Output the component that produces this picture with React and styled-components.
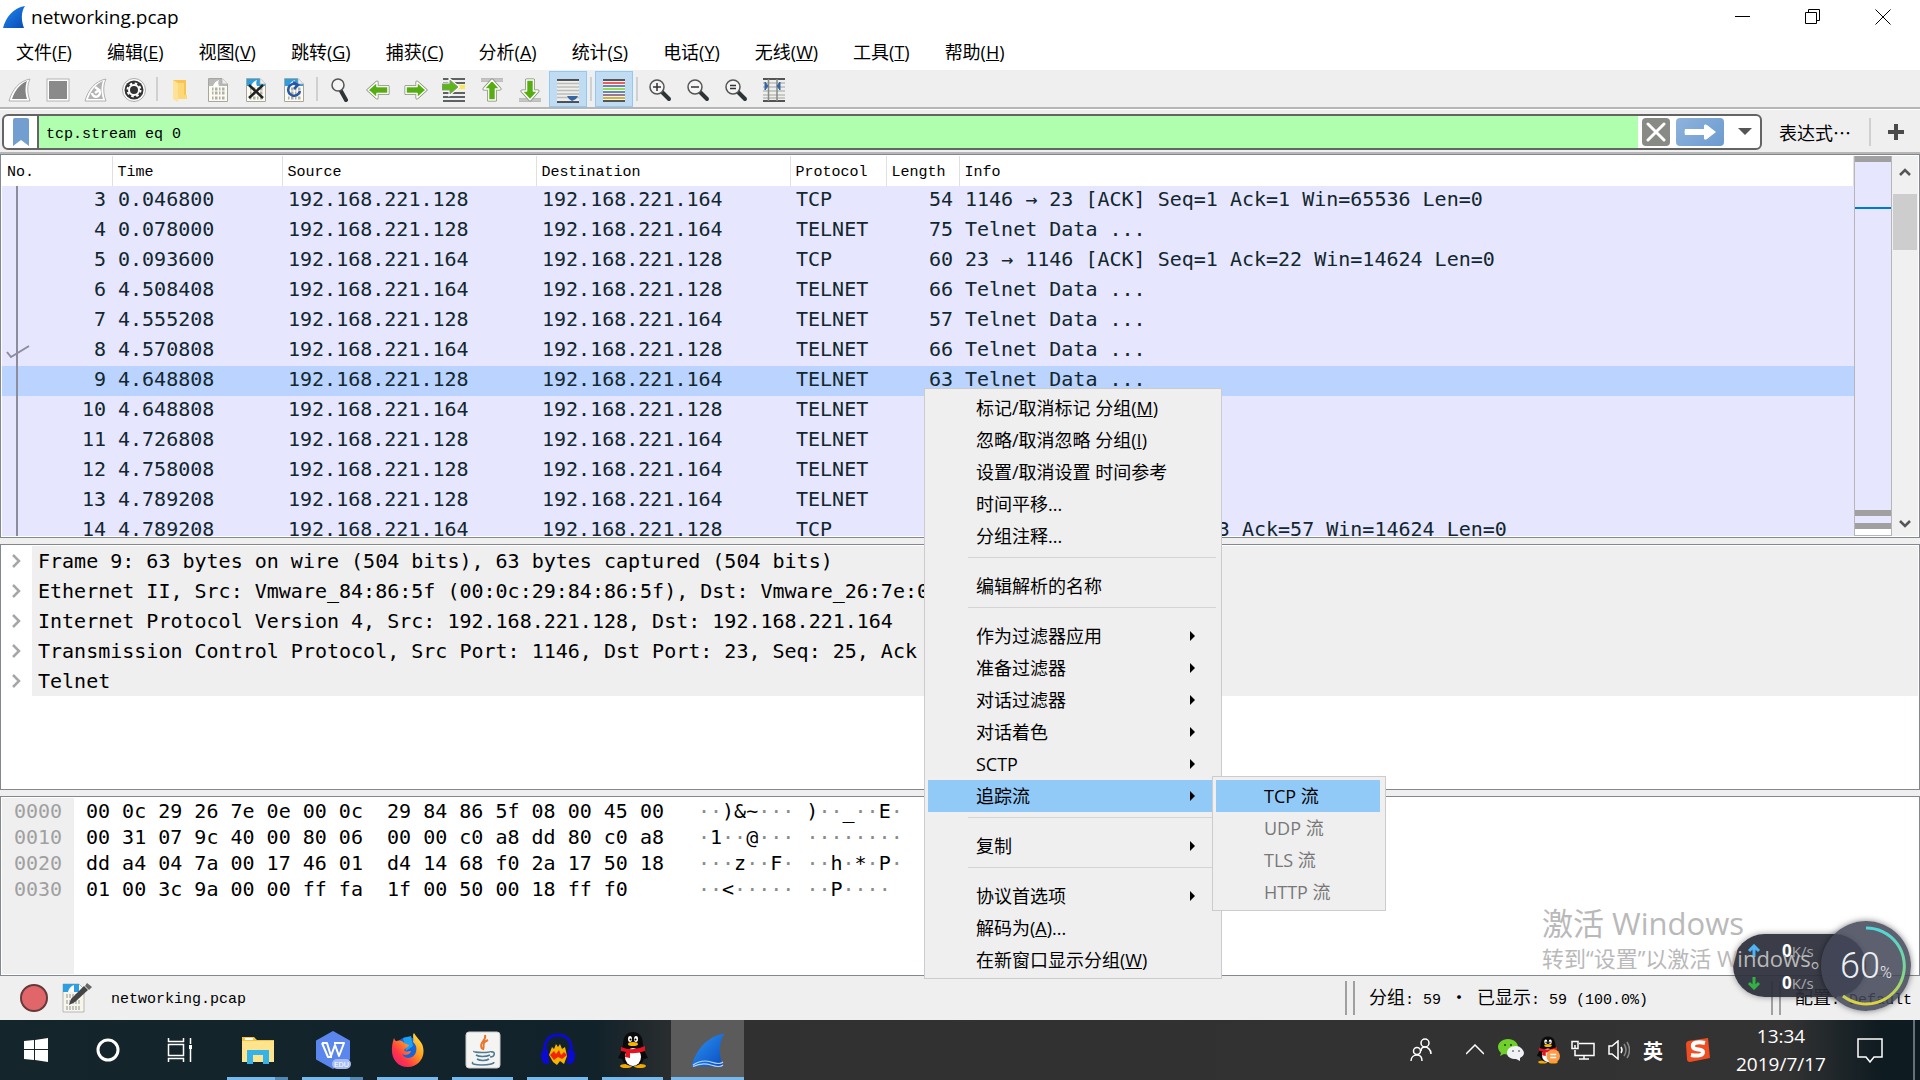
import styled, { createGlobalStyle } from 'styled-components';

const uiFont = `'Open Sans', 'Noto Sans CJK SC', sans-serif`;
const cjkFont = `'Noto Sans CJK SC', sans-serif`;
const monoFont = `'DejaVu Sans Mono', 'Noto Sans CJK SC', monospace`;
const thinMono = `'Liberation Mono', 'Noto Sans CJK SC', monospace`;

const GlobalStyle = createGlobalStyle`
    * {
        box-sizing: border-box;
    }
    body {
        margin: 0;
        overflow: hidden;
        background: #efefef;
        color: #000;
        font-family: ${uiFont};
        font-size: 18px;
    }
    button, input {
        font: inherit;
        color: inherit;
        border: 0;
        padding: 0;
        margin: 0;
        background: none;
        border-radius: 0;
        outline: none;
    }
    svg {
        display: block;
        flex: none;
    }
`;

const Window = styled.div`
    height: 100vh;
    display: flex;
    flex-direction: column;
    position: relative;
    overflow: hidden;
`;

const TitleBar = styled.header`
    height: 34px;
    flex: none;
    display: flex;
    align-items: center;
    background: #fff;
    padding: 0 2px;
`;

const Title = styled.h1`
    margin: 0 auto 0 5px;
    font-size: 19px;
    font-weight: 400;
    line-height: 34px;
`;

const CaptionButton = styled.button`
    width: 70px;
    height: 34px;
    display: flex;
    align-items: center;
    justify-content: center;
`;

const MenuBar = styled.nav`
    height: 37px;
    flex: none;
    display: flex;
    align-items: center;
    gap: 3px;
    background: #fff;
    border-bottom: 1px solid #efefef;
`;

const MenuButton = styled.button`
    padding: 0 16px;
    line-height: 34px;
    white-space: nowrap;
`;

const ToolBar = styled.div`
    height: 38px;
    flex: none;
    display: flex;
    align-items: stretch;
    padding-left: 1px;
    border-bottom: 2px solid #b6b6b6;
`;

const ToolButton = styled.button`
    width: 38px;
    padding-top: 2px;
    display: flex;
    align-items: center;
    justify-content: center;
    background: ${props => props.$on ? '#c0dcf3' : 'none'};
    border: 1px solid ${props => props.$on ? '#90c8f6' : 'transparent'};
`;

const ToolSeparator = styled.span`
    width: 8px;
    padding: 6px 3px;
    &::before {
        content: '';
        display: block;
        width: 2px;
        height: 24px;
        background: #d0d0d0;
    }
`;

const FilterBar = styled.form`
    height: 45px;
    flex: none;
    display: flex;
    align-items: center;
    padding: 2px 0 0 2px;
    border-top: 1px solid #fff;
    border-bottom: 2px solid #b6b6b6;
`;

const FilterBox = styled.div`
    flex: 1;
    height: 36px;
    display: flex;
    align-items: center;
    background: #fff;
    border: 2px solid #646464;
    border-radius: 6px;
    overflow: hidden;
`;

const BookmarkButton = styled.button`
    width: 35px;
    height: 32px;
    display: flex;
    align-items: center;
    justify-content: center;
    border-right: 2px solid #646464;
`;

const FilterInput = styled.input`
    flex: 1;
    min-width: 0;
    height: 32px;
    padding: 4px 7px 0;
    background: #afffaf;
    font-family: ${thinMono};
    font-size: 15px;
`;

const FilterButton = styled.button`
    width: ${props => props.$width}px;
    height: 28px;
    margin-left: ${props => props.$gap}px;
    display: flex;
    align-items: center;
    justify-content: center;
    background: ${props => props.$bg};
    border-radius: 4px;
`;

const ExpressionButton = styled.button`
    margin-left: 17px;
    font-family: ${cjkFont};
    line-height: 28px;
`;

const FilterSeparator = styled.span`
    width: 2px;
    height: 28px;
    margin-left: 18px;
    background: #d0d0d0;
`;

const PlusButton = styled.button`
    width: 49px;
    height: 28px;
    display: flex;
    align-items: center;
    justify-content: center;
`;

const Panes = styled.main`
    flex: 1;
    min-height: 0;
    display: grid;
    grid-template-rows: 384fr 246fr 180fr;
    gap: 6px;
`;

const Pane = styled.section`
    min-height: 0;
    display: flex;
    background: #fff;
    border: 1px solid #828790;
    padding: 1px;
    overflow: hidden;
`;

const ListArea = styled.div`
    flex: 1;
    min-width: 0;
    overflow: hidden;
    background: #e6e6ff;
`;

const PacketTable = styled.table`
    width: 100%;
    table-layout: fixed;
    border-collapse: collapse;
`;

const HeadCell = styled.th`
    width: ${props => props.$width ? `${props.$width}px` : 'auto'};
    height: 30px;
    padding: 4px 0 0 5px;
    background: #fff;
    border-right: 1px solid #e0e0e0;
    text-align: left;
    font-family: ${thinMono};
    font-size: 15px;
    font-weight: 400;
    line-height: 26px;
`;

const PacketRow = styled.tr`
    background: ${props => props.$selected ? '#bad3ff' : '#e6e6ff'};
`;

const PacketCell = styled.td`
    height: 30px;
    padding: 0 6px 4px;
    color: #12272e;
    font-family: ${monoFont};
    font-size: 20px;
    line-height: 26px;
    white-space: pre;
    text-align: ${props => props.$right ? 'right' : 'left'};
`;

const NumberCell = styled(PacketCell)`
    position: relative;
    background: linear-gradient(#8b8e9a, #8b8e9a) 14px 0 / 2px 100% no-repeat;
`;

const AckMark = styled.svg`
    position: absolute;
    left: 3px;
    top: 8px;
`;

const MiniMap = styled.div`
    width: 38px;
    display: flex;
    flex-direction: column;
    border: 1px solid #b6b6b6;
    border-top: 0;
    background: #e6e6ff;
`;

const MapBand = styled.span`
    height: ${props => props.$size ? `${props.$size}px` : 'auto'};
    flex: ${props => props.$size ? 'none' : 1};
    background: ${props => props.$color};
`;

const ScrollBar = styled.div`
    width: 26px;
    padding: 0 1px;
    display: flex;
    flex-direction: column;
    background: #f0f0f0;
`;

const ScrollButton = styled.button`
    height: ${props => props.$size}px;
    flex: none;
    display: flex;
    align-items: center;
    justify-content: center;
`;

const ScrollThumb = styled.div`
    height: 56px;
    flex: none;
    margin-bottom: auto;
    background: #cdcdcd;
`;

const DetailList = styled.ul`
    flex: 1;
    margin: 0;
    padding: 0;
    list-style: none;
    font-family: ${monoFont};
    font-size: 20px;
`;

const DetailItem = styled.li`
    height: 30px;
    display: flex;
`;

const ExpandButton = styled.button`
    width: 30px;
    padding-left: 8px;
`;

const DetailText = styled.span`
    flex: 1;
    padding-left: 6px;
    background: #efefef;
    line-height: 30px;
    white-space: pre;
`;

const OffsetColumn = styled.div`
    width: 72px;
    padding-left: 12px;
    background: #efefef;
    color: #a0a0a0;
`;

const HexArea = styled.div`
    flex: 1;
    display: flex;
    font-family: ${monoFont};
    font-size: 20px;
    line-height: 26px;
    white-space: pre;
`;

const HexColumn = styled.div`
    padding-left: 12px;
`;

const AsciiColumn = styled.div`
    padding-left: 34px;
`;

const Dot = styled.span`
    color: #8a8a8a;
`;

const StatusBar = styled.footer`
    height: 44px;
    flex: none;
    display: flex;
    align-items: center;
    padding-left: 19px;
    font-family: ${thinMono};
    font-size: 15px;
    white-space: pre;
`;

const StatusButton = styled.button`
    width: 30px;
    height: 30px;
    margin-right: 13px;
`;

const StatusText = styled.span`
    width: ${props => props.$width ? `${props.$width}px` : 'auto'};
    flex: ${props => props.$width ? 'none' : 1};
    padding: 4px 0 0 ${props => props.$pad || 0}px;
    line-height: 30px;
`;

const StatusGrip = styled.span`
    width: 10px;
    height: 34px;
    border: solid #a0a0a0;
    border-width: 0 2px;
`;

const Cjk = styled.span`
    display: inline-block;
    min-width: 18px;
    font-family: ${cjkFont};
    font-size: 18px;
    line-height: 24px;
    text-align: center;
`;

const TaskBar = styled.nav`
    height: 60px;
    flex: none;
    display: flex;
    color: #fff;
    background: linear-gradient(90deg, #15252c 0, #12222a 31%, #303030 36%, #333 93%, #0e1b21 98%);
`;

const TaskButton = styled.button`
    width: 72px;
    display: flex;
    align-items: center;
    justify-content: center;
`;

const AppButton = styled.button`
    width: ${props => props.$active ? 73 : 61}px;
    margin: 0 ${props => props.$active ? 1 : 7}px;
    display: flex;
    align-items: center;
    justify-content: center;
    background: ${props => props.$active ? '#5b5b5b' : 'none'};
    border-top: 3px solid transparent;
    border-bottom: 3px solid;
    border-image: ${props => props.$stacked
        ? 'linear-gradient(90deg, #76b9ed 78%, #5488b0 78%) 0 0 3 0'
        : 'linear-gradient(#76b9ed, #76b9ed) 0 0 3 0'};
`;

const AppGroup = styled.div`
    display: flex;
    margin-left: 4px;
    margin-right: auto;
`;

const TrayButton = styled.button`
    width: ${props => props.$width}px;
    display: flex;
    align-items: center;
    justify-content: center;
`;

const InputMode = styled(TrayButton)`
    font-family: ${cjkFont};
    font-weight: 700;
    font-size: 20px;
`;

const Clock = styled.time`
    width: 92px;
    display: flex;
    flex-direction: column;
    justify-content: center;
    text-align: center;
    font-size: 19px;
    line-height: 28px;
`;

const ShowDesktop = styled.button`
    width: 7px;
    border-left: 2px solid #66707a;
`;

const Popup = styled.div`
    position: absolute;
    left: ${props => props.$left}px;
    top: ${props => props.$top}px;
    width: ${props => props.$width}px;
    padding: 3px 5px 2px 3px;
    background: #efefef;
    border: 1px solid #ccc;
    z-index: 2;
`;

const PopupItem = styled.button`
    width: 100%;
    height: 32px;
    display: flex;
    align-items: center;
    justify-content: space-between;
    padding: 0 20px 0 48px;
    color: ${props => props.disabled ? '#787878' : '#000'};
    background: ${props => props.$active ? '#91c9f7' : 'none'};
    line-height: 32px;
    white-space: nowrap;
`;

const PopupSeparator = styled.hr`
    height: 1px;
    margin: 5px 0 12px 40px;
    border: 0;
    background: #d4d4d4;
`;

const Watermark = styled.div`
    position: absolute;
    right: 92px;
    bottom: 107px;
    width: 286px;
    color: #b9b9b9;
    font-size: 22px;
    line-height: 30px;
    white-space: nowrap;
    z-index: 4;
    strong {
        display: block;
        font-size: 31px;
        font-weight: 400;
        line-height: 40px;
    }
`;

const SpeedPill = styled.div`
    position: absolute;
    right: 54px;
    bottom: 83px;
    width: 133px;
    height: 63px;
    padding: 1px 0 0 14px;
    display: flex;
    flex-direction: column;
    justify-content: space-between;
    border-radius: 32px;
    background: rgba(43, 46, 57, 0.93);
    box-shadow: 0 0 6px rgba(0, 0, 0, 0.4);
    z-index: 3;
`;

const SpeedLine = styled.div`
    display: flex;
    align-items: center;
    gap: 21px;
    color: #a6a8ae;
    font-size: 15px;
    line-height: 31px;
    b {
        color: #fff;
        font-size: 17px;
    }
`;

const Gauge = styled.div`
    position: absolute;
    right: 9px;
    bottom: 69px;
    width: 90px;
    height: 90px;
    display: grid;
    place-items: center;
    border-radius: 50%;
    background: rgba(66, 71, 87, 0.86);
    box-shadow: 0 0 6px rgba(0, 0, 0, 0.5);
    z-index: 5;
    > * {
        grid-area: 1 / 1;
    }
`;

const GaugeText = styled.span`
    color: #eceef2;
    font-family: Roboto, sans-serif;
    font-size: 36px;
    font-weight: 300;
    small {
        font-size: 16px;
    }
`;

const menus = ['文件(&F)', '编辑(&E)', '视图(&V)', '跳转(&G)', '捕获(&C)', '分析(&A)', '统计(&S)', '电话(&Y)', '无线(&W)', '工具(&T)', '帮助(&H)'];

const columns = [
    { title: 'No.', width: 110 },
    { title: 'Time', width: 170 },
    { title: 'Source', width: 254 },
    { title: 'Destination', width: 254 },
    { title: 'Protocol', width: 96 },
    { title: 'Length', width: 73 },
    { title: 'Info' },
];

const A = '192.168.221.128';
const B = '192.168.221.164';

const packets = [
    [3, '0.046800', A, B, 'TCP', 54, '1146 → 23 [ACK] Seq=1 Ack=1 Win=65536 Len=0'],
    [4, '0.078000', A, B, 'TELNET', 75, 'Telnet Data ...'],
    [5, '0.093600', B, A, 'TCP', 60, '23 → 1146 [ACK] Seq=1 Ack=22 Win=14624 Len=0'],
    [6, '4.508408', B, A, 'TELNET', 66, 'Telnet Data ...'],
    [7, '4.555208', A, B, 'TELNET', 57, 'Telnet Data ...'],
    [8, '4.570808', B, A, 'TELNET', 66, 'Telnet Data ...'],
    [9, '4.648808', A, B, 'TELNET', 63, 'Telnet Data ...'],
    [10, '4.648808', B, A, 'TELNET', 60, 'Telnet Data'],
    [11, '4.726808', A, B, 'TELNET', 60, 'Telnet Data'],
    [12, '4.758008', A, B, 'TELNET', 60, 'Telnet Data'],
    [13, '4.789208', A, B, 'TELNET', 60, 'Telnet Data'],
    [14, '4.789208', B, A, 'TCP', 60, '23 → 1146 [ACK] Seq=43 Ack=57 Win=14624 Len=0'],
];

const details = [
    'Frame 9: 63 bytes on wire (504 bits), 63 bytes captured (504 bits)',
    'Ethernet II, Src: Vmware_84:86:5f (00:0c:29:84:86:5f), Dst: Vmware_26:7e:0e',
    'Internet Protocol Version 4, Src: 192.168.221.128, Dst: 192.168.221.164',
    'Transmission Control Protocol, Src Port: 1146, Dst Port: 23, Seq: 25, Ack',
    'Telnet',
];

const hexRows = [
    ['0000', '00 0c 29 26 7e 0e 00 0c  29 84 86 5f 08 00 45 00', '··)&~··· )··_··E·'],
    ['0010', '00 31 07 9c 40 00 80 06  00 00 c0 a8 dd 80 c0 a8', '·1··@··· ········'],
    ['0020', 'dd a4 04 7a 00 17 46 01  d4 14 68 f0 2a 17 50 18', '···z··F· ··h·*·P·'],
    ['0030', '01 00 3c 9a 00 00 ff fa  1f 00 50 00 18 ff f0', '··<····· ··P····'],
];

const contextMenu = [
    { label: '标记/取消标记 分组(&M)' },
    { label: '忽略/取消忽略 分组(&I)' },
    { label: '设置/取消设置 时间参考' },
    { label: '时间平移...' },
    { label: '分组注释...' },
    null,
    { label: '编辑解析的名称' },
    null,
    { label: '作为过滤器应用', sub: true },
    { label: '准备过滤器', sub: true },
    { label: '对话过滤器', sub: true },
    { label: '对话着色', sub: true },
    { label: 'SCTP', sub: true },
    { label: '追踪流', sub: true, active: true },
    null,
    { label: '复制', sub: true },
    null,
    { label: '协议首选项', sub: true },
    { label: '解码为(&A)...' },
    { label: '在新窗口显示分组(&W)' },
];

// "&X" marks the underlined access key
const Mnemonic = ({ text }) => {
    const [head, tail] = text.split('&');
    return <span>{head}{tail && <><u>{tail[0]}</u>{tail.slice(1)}</>}</span>;
};

const Fin = ({ size = 24, from = '#1f8bf0', to = '#0b49b5', stroke = 'none', children }) => {
    const id = `fin${from.slice(1)}${size}`;
    return (
        <svg width={size} height={size} viewBox="0 0 24 24">
            <defs>
                <linearGradient id={id} x1="0" y1="0" x2="1" y2="1">
                    <stop offset="0" stopColor={from} />
                    <stop offset="1" stopColor={to} />
                </linearGradient>
            </defs>
            <path d="M1 23C4 12 11 3 23 1C19 7 19 15 22 23Z" fill={`url(#${id})`} stroke={stroke} />
            {children}
        </svg>
    );
};

const GreyFin = ({ restart }) => (
    <svg width="24" height="24" viewBox="0 0 24 24">
        <path d="M1 23C4 12 11 3 22 1C19 7 19 15 22 23Z" fill="#fff" stroke="#b0b0b0" />
        <path d="M4 21C7 12 12 6 19 3C17 8 17 15 19 21Z" fill={restart ? '#b2b2b2' : '#838383'} />
        {restart && <path d="M8 15a4 4 0 1 0 7-3M11 9l4 3l-4 3" fill="none" stroke="#fff" strokeWidth="2.5" />}
    </svg>
);

const StopIcon = () => (
    <svg width="24" height="24" viewBox="0 0 24 24">
        <rect x="1" y="1" width="22" height="22" fill="#fff" stroke="#b4b4b4" />
        <rect x="3" y="3" width="18" height="18" fill="#8a8a8a" />
    </svg>
);

const GearIcon = () => (
    <svg width="24" height="24" viewBox="0 0 24 24">
        <circle cx="12" cy="12" r="11.5" fill="#fff" stroke="#aaa" />
        <circle cx="12" cy="12" r="9.5" fill="#333" />
        <circle cx="12" cy="12" r="5" fill="none" stroke="#fff" strokeWidth="2" />
        <circle cx="12" cy="12" r="6.5" fill="none" stroke="#fff" strokeWidth="2" strokeDasharray="2.5 2.6" />
        <circle cx="12" cy="12" r="2.5" fill="#333" />
    </svg>
);

const FolderIcon = () => (
    <svg width="16" height="24" viewBox="0 0 16 24">
        <path d="M1 2H14V21H4Z" fill="#f6c552" />
        <path d="M1 2L6 5V24L1 21Z" fill="#ffe197" />
        <path d="M6 5H12V17H15V21H6Z" fill="#fcd877" />
    </svg>
);

const FileIcon = ({ grey, mark }) => (
    <svg width="22" height="24" viewBox="0 0 22 24">
        <path d="M1.5.5H15L20.5 6V23.5H1.5Z" fill="#fbfbf2" stroke="#a6a8a0" />
        <path d="M2 1H15L20 6V8H2Z" fill={grey ? '#b8b8b8' : '#2d9fe0'} />
        <path d="M6 8C7 5 9 3 12 2C11 4 11 6 12 8Z" fill="#fff" />
        <path d="M15 .5V6H20.5" fill="#eee" stroke="#aaa" strokeWidth=".7" />
        <path d="M5 11H18M5 15H18M5 20H18" stroke="#b0b0a8" strokeWidth="3" strokeDasharray="1.5 1.5 2.5 1.5" />
        {mark === 'x' && <path d="M4 7L18 20M18 7L4 20" stroke="#222" strokeWidth="2.5" />}
        {mark === 'reload' && <path d="M14 6.5A6 6 0 1 0 17 13M10 4L15 7L11 11" fill="none" stroke="#2858a5" strokeWidth="2.5" />}
    </svg>
);

const Lens = ({ sign, plain }) => (
    <svg width="24" height="24" viewBox="0 0 24 24">
        <path d={plain ? 'M13 13L18 22' : 'M14 14L21 21'} stroke="#2e3436" strokeWidth="4" strokeLinecap="round" />
        <circle cx={plain ? 10 : 9} cy={plain ? 7 : 9} r={plain ? 6 : 7} fill="#f5f5f5" stroke="#555" strokeWidth="1.5" />
        {sign && <path d={sign} stroke="#333" strokeWidth="1.5" />}
    </svg>
);

const arrowPath = 'M2 12L11 4V8.5H22V15.5H11V20Z';

const GreenArrow = ({ turn = 0, bar }) => (
    <svg width="24" height="24" viewBox="0 0 24 24">
        {bar && <path d={bar} stroke="#8a8a8a" strokeWidth="3" />}
        {bar && <path d={bar} stroke="#fff" strokeWidth="1" />}
        <g transform={`rotate(${turn} 12 12)`}>
            <path d={arrowPath} fill="#5cb615" stroke="#7d8a70" strokeWidth="3" strokeLinejoin="round" />
            <path d={arrowPath} fill="#5cb615" stroke="#fff" strokeWidth="1.5" strokeLinejoin="round" />
            <path d="M4 12L10 7V10H21V14H10V17Z" fill="#55ad12" />
        </g>
    </svg>
);

const GotoIcon = () => (
    <svg width="24" height="24" viewBox="0 0 24 24">
        <path d="M1 1H23M1 5H23M1 15H23M1 19H23M1 23H23" stroke="#2e3436" strokeWidth="1.5" />
        <path d="M14 9H23" stroke="#fce94f" strokeWidth="4" />
        <path d="M0 6H8V2L16 9L8 16V12H0Z" fill="#5cb615" stroke="#fff" strokeWidth="3" />
        <path d="M0 6H8V2L16 9L8 16V12H0Z" fill="#5cb615" stroke="#8a9a80" />
    </svg>
);

const AutoScrollIcon = () => (
    <svg width="24" height="26" viewBox="0 0 24 26">
        <path d="M1 3V25H23V3Z" fill="#eee" />
        <path d="M1 6.5H23M1 10H23M1 13.5H23M1 17H23M1 20.5H23" stroke="#babdb6" strokeWidth="1.5" />
        <path d="M1 3H23M1 25H23" stroke="#222" strokeWidth="1.5" />
        <path d="M11 19H22L20 22L16 24L13 22Z" fill="#3465a4" />
    </svg>
);

const ColorRulesIcon = () => (
    <svg width="24" height="26" viewBox="0 0 24 26">
        <path d="M1 2V25H23V2Z" fill="#f4f4f4" />
        {['#222', '#ef2929', '#3465a4', '#73d216', '#3465a4', '#75507b', '#c4a000', '#222'].map((c, i) => (
            <path key={i} d={`M1 ${3 + i * 3}H23`} stroke={c} strokeWidth="1.5" />
        ))}
    </svg>
);

const ResizeIcon = () => (
    <svg width="24" height="24" viewBox="0 0 24 24">
        <path d="M1 5H23M1 9H23M1 13H23M1 17H23M1 20H23" stroke="#babdb6" strokeWidth="1.5" />
        <path d="M1 1H23M1 23H23" stroke="#222" strokeWidth="1.5" />
        <path d="M6.5 1V23M15 1V23" stroke="#888a85" strokeWidth="1.5" />
        <path d="M3 4L6 8L3 12ZM18 4L15 8L18 12Z" fill="#3465a4" stroke="#3465a4" />
    </svg>
);

const Chevron = ({ d, color = '#555' }) => (
    <svg width="14" height="14" viewBox="0 0 14 14">
        <path d={d} fill="none" stroke={color} strokeWidth="2.5" />
    </svg>
);

const SubArrow = () => (
    <svg width="6" height="10" viewBox="0 0 6 10"><path d="M0 0L5 5L0 10Z" /></svg>
);

const Penguin = ({ badge }) => (
    <svg width={badge ? 24 : 32} height={badge ? 28 : 36} viewBox="0 0 32 36">
        <ellipse cx="9" cy="34" rx="6" ry="2" fill="#f5a800" />
        <ellipse cx="23" cy="34" rx="6" ry="2" fill="#f5a800" />
        <path d="M6 16L1 26L5 27ZM26 16L31 26L27 27Z" fill="#0a0a0a" />
        <path d="M6 13C6 4 10 0 16 0S26 4 26 13C30 24 27 34 16 34S2 24 6 13Z" fill="#0a0a0a" />
        <ellipse cx="16" cy="25" rx="8" ry="9" fill="#fff" />
        <ellipse cx="13" cy="7" rx="2" ry="3" fill="#fff" />
        <ellipse cx="19" cy="7" rx="2" ry="3" fill="#fff" />
        <circle cx="13.5" cy="7.5" r="1" />
        <circle cx="18.5" cy="7.5" r="1" />
        <ellipse cx="16" cy="12" rx="5" ry="2" fill="#f7b500" />
        <path d="M4 15Q16 20 28 14L28 19Q18 22 13 21V26L8 25L9 20L4 19Z" fill="#e5121f" />
        {badge && <circle cx="23" cy="26" r="9" fill="#ff9a45" />}
        {badge && <path d="M19 24H27M19 28H27" stroke="#fff" strokeWidth="2" />}
    </svg>
);

const ExplorerIcon = () => (
    <svg width="34" height="28" viewBox="0 0 34 28">
        <path d="M1 1H13L16 4H33V26H1Z" fill="#f6c343" />
        <path d="M4 2H12V4H4Z" fill="#fff" />
        <path d="M1 5H33V26H1Z" fill="#ffe48e" />
        <path d="M6 28V14H28V28H22V19H12V28Z" fill="#35b2e8" />
    </svg>
);

const WpsIcon = () => (
    <svg width="36" height="38" viewBox="0 0 36 38">
        <path d="M18 1L34 10V28L18 37L2 28V10Z" fill="#5b86ee" stroke="#5b86ee" strokeWidth="2" strokeLinejoin="round" />
        <path d="M7 12H12L16 25L20 14L24 25L29 12H19M7 12L13 26H17" fill="none" stroke="#fff" strokeWidth="2" strokeLinejoin="round" />
        <rect x="17" y="28" width="19" height="10" rx="5" fill="#a5bcf5" />
        <text x="19" y="36" fill="#fff" fontSize="8" fontFamily="Roboto">EDU</text>
    </svg>
);

const FirefoxIcon = () => (
    <svg width="34" height="36" viewBox="0 0 34 36">
        <defs>
            <linearGradient id="fox" x1="1" y1="0" x2="0" y2="1">
                <stop offset="0" stopColor="#fff44f" />
                <stop offset=".4" stopColor="#ff9a1f" />
                <stop offset=".7" stopColor="#ff3647" />
                <stop offset="1" stopColor="#e31587" />
            </linearGradient>
        </defs>
        <circle cx="17" cy="18" r="13" fill="#1665d8" />
        <path d="M12 6L20 4L22 14L15 19Z" fill="#1aa0f5" />
        <path d="M3 6C4 9 5 9 6 9C9 8 12 9 13 11L18 13C18 15 14 16 13 18C15 21 18 19 20 19C19 23 14 24 11 22C14 28 23 27 25 20C26 15 25 13 22 10C23 6 21 4 23 1C25 5 29 8 31 12C36 24 28 35 17 35C6 35 0 26 1 16C1 12 2 9 3 6Z" fill="url(#fox)" />
    </svg>
);

const JavaIcon = () => (
    <svg width="36" height="38" viewBox="0 0 36 38">
        <rect x="1" y="1" width="34" height="36" rx="3" fill="#f4f4f2" stroke="#ccc" />
        <path d="M20 4C22 10 13 11 17 18M23 9C16 12 20 14 18 19" fill="none" stroke="#e8762d" strokeWidth="2" />
        <path d="M9 20C7 22 26 22 26 20M11 24C14 26 21 26 25 24M12 28C15 30 21 30 24 28M8 31C3 35 29 35 29 31M26 21C31 20 30 26 25 26" fill="none" stroke="#4f7a94" strokeWidth="1.6" />
    </svg>
);

const AudacityIcon = () => (
    <svg width="36" height="34" viewBox="0 0 36 34">
        <path d="M9 22L12 14L14 16L16 11L18 14L20 11L22 16L25 14L27 23L24 31L20 28L17 32L13 29Z" fill="#f5b400" />
        <path d="M10 22L14 18L16 21L19 17L21 22L24 19L27 22L22 26L18 24L14 27Z" fill="#f0260c" />
        <path d="M5 22C3 7 10 2 18 2S33 7 31 22" fill="none" stroke="#0b0bd0" strokeWidth="3" />
        <path d="M2 18L8 16L9 31L5 31C1 29 0 22 2 18ZM34 18L28 16L27 31L31 31C35 29 36 22 34 18Z" fill="#0b0bd0" />
    </svg>
);

const App = () => (
    <Window>
        <GlobalStyle />
        <TitleBar>
            <Fin />
            <Title>networking.pcap</Title>
            <CaptionButton aria-label="Minimize">
                <svg width="16" height="16" viewBox="0 0 16 16"><path d="M0 7.5H15" stroke="#000" /></svg>
            </CaptionButton>
            <CaptionButton aria-label="Restore">
                <svg width="16" height="16" viewBox="0 0 16 16"><path d="M.5 3.5H11.5V14.5H.5ZM3.5 3.5V.5H14.5V11.5H11.5" fill="none" stroke="#000" /></svg>
            </CaptionButton>
            <CaptionButton aria-label="Close">
                <svg width="16" height="16" viewBox="0 0 16 16"><path d="M.5.5L15.5 15.5M15.5.5L.5 15.5" stroke="#000" /></svg>
            </CaptionButton>
        </TitleBar>
        <MenuBar>
            {menus.map(menu => <MenuButton key={menu}><Mnemonic text={menu} /></MenuButton>)}
        </MenuBar>
        <ToolBar>
            <ToolButton aria-label="Start capture"><GreyFin /></ToolButton>
            <ToolButton aria-label="Stop capture"><StopIcon /></ToolButton>
            <ToolButton aria-label="Restart capture"><GreyFin restart /></ToolButton>
            <ToolButton aria-label="Capture options"><GearIcon /></ToolButton>
            <ToolSeparator />
            <ToolButton aria-label="Open"><FolderIcon /></ToolButton>
            <ToolButton aria-label="Save"><FileIcon grey /></ToolButton>
            <ToolButton aria-label="Close file"><FileIcon mark="x" /></ToolButton>
            <ToolButton aria-label="Reload"><FileIcon mark="reload" /></ToolButton>
            <ToolSeparator />
            <ToolButton aria-label="Find"><Lens plain /></ToolButton>
            <ToolButton aria-label="Back"><GreenArrow /></ToolButton>
            <ToolButton aria-label="Forward"><GreenArrow turn={180} /></ToolButton>
            <ToolButton aria-label="Go to packet"><GotoIcon /></ToolButton>
            <ToolButton aria-label="First packet"><GreenArrow turn={90} bar="M1 2H23" /></ToolButton>
            <ToolButton aria-label="Last packet"><GreenArrow turn={270} bar="M1 22H23" /></ToolButton>
            <ToolButton $on aria-label="Auto scroll"><AutoScrollIcon /></ToolButton>
            <ToolSeparator />
            <ToolButton $on aria-label="Colorize"><ColorRulesIcon /></ToolButton>
            <ToolSeparator />
            <ToolButton aria-label="Zoom in"><Lens sign="M5 9H13M9 5V13" /></ToolButton>
            <ToolButton aria-label="Zoom out"><Lens sign="M5 9H13" /></ToolButton>
            <ToolButton aria-label="Normal size"><Lens sign="M6 7.5H12M6 10.5H12" /></ToolButton>
            <ToolButton aria-label="Resize columns"><ResizeIcon /></ToolButton>
        </ToolBar>
        <FilterBar onSubmit={e => e.preventDefault()}>
            <FilterBox>
                <BookmarkButton type="button" aria-label="Bookmarks">
                    <svg width="16" height="28" viewBox="0 0 16 28"><path d="M0 2Q0 0 2 0H14Q16 0 16 2V28L8 22L0 28Z" fill="#729fcf" /></svg>
                </BookmarkButton>
                <FilterInput aria-label="Display filter" defaultValue="tcp.stream eq 0" />
                <FilterButton type="button" $width={28} $gap={4} $bg="#888a85" aria-label="Clear">
                    <svg width="20" height="20" viewBox="0 0 20 20"><path d="M2 2L18 18M18 2L2 18" stroke="#fff" strokeWidth="3" strokeLinecap="round" /></svg>
                </FilterButton>
                <FilterButton type="submit" $width={48} $gap={6} $bg="linear-gradient(135deg, #8fb3dc, #6b9bd0)" aria-label="Apply">
                    <svg width="32" height="16" viewBox="0 0 32 16"><path d="M1 5H20V1Q21 0 23 1L32 8L23 15Q21 16 20 15V11H1Q0 8 1 5Z" fill="#fff" /></svg>
                </FilterButton>
                <FilterButton type="button" $width={30} $gap={6} $bg="none" aria-label="Recent filters">
                    <svg width="14" height="8" viewBox="0 0 14 8"><path d="M0 0H14L7 7Z" fill="#555" /></svg>
                </FilterButton>
            </FilterBox>
            <ExpressionButton type="button">表达式…</ExpressionButton>
            <FilterSeparator />
            <PlusButton type="button" aria-label="Add filter button">
                <svg width="16" height="16" viewBox="0 0 16 16"><path d="M0 8H16M8 0V16" stroke="#4a4a4a" strokeWidth="4" /></svg>
            </PlusButton>
        </FilterBar>
        <Panes>
            <Pane>
                <ListArea>
                    <PacketTable>
                        <thead>
                            <tr>
                                {columns.map(col => <HeadCell key={col.title} $width={col.width}>{col.title}</HeadCell>)}
                            </tr>
                        </thead>
                        <tbody>
                            {packets.map(([no, time, src, dst, proto, len, info]) => (
                                <PacketRow key={no} $selected={no === 9}>
                                    <NumberCell $right>
                                        {no === 8 && (
                                            <AckMark width="26" height="16" viewBox="0 0 26 16">
                                                <path d="M2 8L6 13L24 2" fill="none" stroke="#8b8e9a" strokeWidth="2" />
                                            </AckMark>
                                        )}
                                        {no}
                                    </NumberCell>
                                    <PacketCell>{time}</PacketCell>
                                    <PacketCell>{src}</PacketCell>
                                    <PacketCell>{dst}</PacketCell>
                                    <PacketCell>{proto}</PacketCell>
                                    <PacketCell $right>{len}</PacketCell>
                                    <PacketCell>{info}</PacketCell>
                                </PacketRow>
                            ))}
                        </tbody>
                    </PacketTable>
                </ListArea>
                <MiniMap>
                    <MapBand $size={6} $color="#a0a0a0" />
                    <MapBand $size={45} $color="#e6e6ff" />
                    <MapBand $size={2} $color="#0078d7" />
                    <MapBand $color="#e6e6ff" />
                    <MapBand $size={6} $color="#a0a0a0" />
                    <MapBand $size={7} $color="#e6e6ff" />
                    <MapBand $size={6} $color="#a0a0a0" />
                    <MapBand $size={6} $color="#fff" />
                </MiniMap>
                <ScrollBar>
                    <ScrollButton $size={38} aria-label="Scroll up"><Chevron d="M2 7L7 2L12 7" /></ScrollButton>
                    <ScrollThumb />
                    <ScrollButton $size={26} aria-label="Scroll down"><Chevron d="M2 5L7 10L12 5" /></ScrollButton>
                </ScrollBar>
            </Pane>
            <Pane>
                <DetailList>
                    {details.map(line => (
                        <DetailItem key={line}>
                            <ExpandButton aria-label="Expand"><Chevron d="M3 1L9 7L3 13" color="#a6a6a6" /></ExpandButton>
                            <DetailText>{line}</DetailText>
                        </DetailItem>
                    ))}
                </DetailList>
            </Pane>
            <Pane>
                <HexArea>
                    <OffsetColumn>
                        {hexRows.map(([offset]) => <div key={offset}>{offset}</div>)}
                    </OffsetColumn>
                    <HexColumn>
                        {hexRows.map(([offset, hex]) => <div key={offset}>{hex}</div>)}
                    </HexColumn>
                    <AsciiColumn>
                        {hexRows.map(([offset, , ascii]) => (
                            <div key={offset}>
                                {ascii.split(/(·+)/).map((part, i) => part[0] === '·' ? <Dot key={i}>{part}</Dot> : part)}
                            </div>
                        ))}
                    </AsciiColumn>
                </HexArea>
            </Pane>
        </Panes>
        <StatusBar>
            <StatusButton aria-label="Expert info">
                <svg width="30" height="30" viewBox="0 0 30 30"><circle cx="15" cy="15" r="13" fill="#e0666a" stroke="#66393b" strokeWidth="2" /></svg>
            </StatusButton>
            <StatusButton aria-label="Capture comment">
                <svg width="30" height="30" viewBox="0 0 30 30">
                    <path d="M1 1H17L22 6V29H1Z" fill="#f6f6ec" stroke="#b8b8b0" />
                    <path d="M1 1H17V9H1Z" fill="#2d9fe0" />
                    <path d="M6 9C7 5 9 3 12 2V9Z" fill="#fff" />
                    <path d="M4 13H19M4 19H19M4 25H19" stroke="#c4c4bc" strokeWidth="4" strokeDasharray="2 1" />
                    <path d="M7 22L9 16L22 3L26 7L13 19Z" fill="#444" />
                    <path d="M23 3L25 0L30 4L27 7Z" fill="#666" />
                </svg>
            </StatusButton>
            <StatusText $pad={6}>networking.pcap</StatusText>
            <StatusGrip />
            <StatusText $width={416} $pad={14}>
                <Cjk>分组</Cjk>: 59 <Cjk>•</Cjk> <Cjk>已显示</Cjk>: 59 (100.0%)
            </StatusText>
            <StatusGrip />
            <StatusText $width={139} $pad={14}><Cjk>配置</Cjk>: Default</StatusText>
        </StatusBar>
        <TaskBar>
            <TaskButton aria-label="Start">
                <svg width="24" height="24" viewBox="0 0 24 24"><path d="M0 3L10 2V11H0ZM11 2L24 0V11H11ZM0 12H10V22L0 21ZM11 12H24V24L11 22Z" fill="#fff" /></svg>
            </TaskButton>
            <TaskButton aria-label="Cortana">
                <svg width="24" height="24" viewBox="0 0 24 24"><circle cx="12" cy="12" r="10" fill="none" stroke="#fff" strokeWidth="3" /></svg>
            </TaskButton>
            <TaskButton aria-label="Task view">
                <svg width="26" height="24" viewBox="0 0 26 24">
                    <path d="M1.5 0V3.5H16.5V0M1.5 6.5H16.5V17.5H1.5ZM1.5 24V20.5H16.5V24M23.5 0V6M23.5 11V24" fill="none" stroke="#fff" strokeWidth="1.5" />
                    <path d="M22 7H25V11H22Z" fill="#fff" />
                </svg>
            </TaskButton>
            <AppGroup>
                <AppButton $stacked aria-label="Explorer"><ExplorerIcon /></AppButton>
                <AppButton $stacked aria-label="WPS"><WpsIcon /></AppButton>
                <AppButton aria-label="Firefox"><FirefoxIcon /></AppButton>
                <AppButton aria-label="Java"><JavaIcon /></AppButton>
                <AppButton aria-label="Audacity"><AudacityIcon /></AppButton>
                <AppButton aria-label="QQ"><Penguin /></AppButton>
                <AppButton $active aria-label="Wireshark">
                    <Fin size={36} from="#2c96f5" to="#0a4cc0">
                        <path d="M2 22Q8 18 14 20T22 20M2 23Q8 20 14 22T22 22" fill="none" stroke="#b9d6f7" strokeWidth=".8" />
                    </Fin>
                </AppButton>
            </AppGroup>
            <TrayButton $width={60} aria-label="People">
                <svg width="22" height="24" viewBox="0 0 22 24">
                    <g fill="none" stroke="#fff" strokeWidth="1.5">
                        <circle cx="15" cy="5" r="4" /><circle cx="7" cy="13" r="3.5" />
                        <path d="M1 23C1 19 4 17 7 17S12 19 12 23M11 13C11 10 13 9 15 9S21 11 21 16" />
                    </g>
                </svg>
            </TrayButton>
            <TrayButton $width={48} aria-label="Hidden icons">
                <svg width="18" height="12" viewBox="0 0 18 12"><path d="M0 10L9 1L18 10" fill="none" stroke="#fff" strokeWidth="1.5" /></svg>
            </TrayButton>
            <TrayButton $width={24} aria-label="WeChat">
                <svg width="26" height="22" viewBox="0 0 26 22">
                    <path d="M10 0C4 0 0 4 0 8C0 11 2 13 3 14L2 17L6 15C16 18 20 12 20 8S16 0 10 0Z" fill="#6fd02c" />
                    <path d="M18 7C12 7 9 10 9 14S13 20 18 20L22 22L22 19C24 18 26 16 26 14S23 7 18 7Z" fill="#f0f2f5" />
                    <path d="M6 5h2v2h-2zM12 5h2v2h-2z" fill="#2e6a0e" /><path d="M14 11h2v2h-2zM20 11h2v2h-2z" fill="#999" />
                </svg>
            </TrayButton>
            <TrayButton $width={50} aria-label="QQ messages"><Penguin badge /></TrayButton>
            <TrayButton $width={20} aria-label="Network">
                <svg width="24" height="20" viewBox="0 0 24 20">
                    <path d="M8 3.5H23V15.5H4V10M13 16V19M8 19H18M1 1.5H7V8.5H1ZM4 5V8" fill="none" stroke="#fff" strokeWidth="1.5" />
                </svg>
            </TrayButton>
            <TrayButton $width={52} aria-label="Volume">
                <svg width="22" height="20" viewBox="0 0 22 20">
                    <path d="M1 6H4L10 1V19L4 14H1Z" fill="none" stroke="#fff" strokeWidth="1.5" />
                    <path d="M13 7Q15 10 13 13" fill="none" stroke="#fff" strokeWidth="1.5" />
                    <path d="M16 4Q20 10 16 16M19 2Q24 10 19 18" fill="none" stroke="#888" strokeWidth="1.5" />
                </svg>
            </TrayButton>
            <InputMode $width={16}>英</InputMode>
            <TrayButton $width={74} aria-label="Sogou">
                <svg width="26" height="24" viewBox="0 0 26 24">
                    <path d="M3 3L23 0L25 20L5 24Q2 24 2 21L1 6Q1 4 3 3Z" fill="#f04e22" />
                    <path d="M20 5C12 3 7 5 8 9C9 13 18 10 18 14C18 18 12 18 6 17" fill="none" stroke="#fff" strokeWidth="4" />
                </svg>
            </TrayButton>
            <Clock><span>13:34</span><span>2019/7/17</span></Clock>
            <TrayButton $width={86} aria-label="Notifications">
                <svg width="26" height="26" viewBox="0 0 26 26"><path d="M1 2H25V20H17L13 25L9 20H1Z" fill="none" stroke="#fff" strokeWidth="1.5" /></svg>
            </TrayButton>
            <ShowDesktop aria-label="Show desktop" />
        </TaskBar>
        <Popup $left={924} $top={388} $width={298} role="menu">
            {contextMenu.map((item, i) => item
                ? (
                    <PopupItem key={i} role="menuitem" $active={item.active}>
                        <Mnemonic text={item.label} />
                        {item.sub && <SubArrow />}
                    </PopupItem>
                )
                : <PopupSeparator key={i} />
            )}
        </Popup>
        <Popup $left={1212} $top={776} $width={174} role="menu">
            <PopupItem role="menuitem" $active>TCP 流</PopupItem>
            <PopupItem role="menuitem" disabled>UDP 流</PopupItem>
            <PopupItem role="menuitem" disabled>TLS 流</PopupItem>
            <PopupItem role="menuitem" disabled>HTTP 流</PopupItem>
        </Popup>
        <SpeedPill>
            <SpeedLine>
                <svg width="14" height="14" viewBox="0 0 14 14"><path d="M7 13V2M2 7L7 2L12 7" fill="none" stroke="#4db4f5" strokeWidth="3" /></svg>
                <span><b>0</b>K/s</span>
            </SpeedLine>
            <SpeedLine>
                <svg width="14" height="14" viewBox="0 0 14 14"><path d="M7 1V12M2 7L7 12L12 7" fill="none" stroke="#33b043" strokeWidth="3" /></svg>
                <span><b>0</b>K/s</span>
            </SpeedLine>
        </SpeedPill>
        <Watermark>
            <strong>激活 Windows</strong>
            转到“设置”以激活 Windows。
        </Watermark>
        <Gauge>
            <svg width="90" height="90" viewBox="0 0 90 90">
                <defs>
                    <linearGradient id="ring" x1="0" y1="0" x2="0" y2="1">
                        <stop offset="0" stopColor="#4fd6d8" />
                        <stop offset=".6" stopColor="#7fd88c" />
                        <stop offset="1" stopColor="#e0d23c" />
                    </linearGradient>
                </defs>
                <path d="M45 7A38 38 0 1 1 22 75" fill="none" stroke="url(#ring)" strokeWidth="3" />
            </svg>
            <GaugeText>60<small>%</small></GaugeText>
        </Gauge>
    </Window>
);

export default App;
